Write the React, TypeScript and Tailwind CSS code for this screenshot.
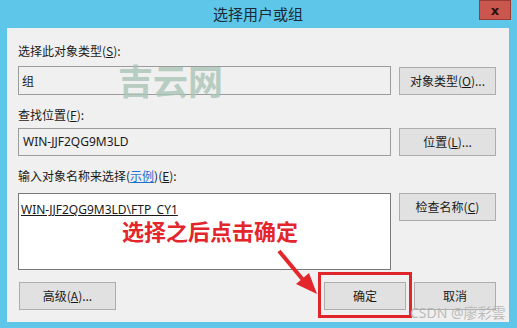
import React from "react";

const cjk = { fontFamily: '"Noto Sans CJK SC", "Noto Sans", sans-serif' };

function Btn({ children, className = "w-[97px]" }: { children: React.ReactNode; className?: string }) {
  return (
    <div
      className={`h-[28px] flex items-center justify-center bg-[#e1e1e1] border border-[#adadad] text-[12px] text-[#1a1a1a] ${className}`}
    >
      {children}
    </div>
  );
}

export default function App() {
  return (
    <div className="w-[517px] h-[328px] bg-[#5ec6e8] flex flex-col relative overflow-hidden" style={cjk}>
      {/* title bar */}
      <div className="h-[28px] relative flex items-center justify-center">
        <span className="text-[15px] text-[#1b2a33] pr-[1px]">选择用户或组</span>
        <div className="absolute left-[479px] top-0 w-[32px] h-[20px] bg-[#c9574d] border border-[#9a3b34] flex items-center justify-center">
          <span className="text-[13px] font-bold text-[#2a0f0d] leading-none" style={{ fontFamily: '"DejaVu Sans", sans-serif' }}>x</span>
        </div>
      </div>
      {/* body */}
      <div className="flex-1 flex pl-[7px] pr-[8px] pb-[6px]">
        <div className="flex-1 bg-[#f0f0f0] pl-[11px] pr-[13px] pt-[14px] flex flex-col text-[12px] text-[#1a1a1a]">
          <div className="h-[17px] leading-[17px]">选择此对象类型(<u>S</u>):</div>
          <div className="mt-[7px] flex gap-[8px]">
            <div className="w-[373px] h-[29px] border border-[#9c9c9c] bg-[#f0f0f0] pl-[3px] flex items-center">组</div>
            <Btn className="w-[97px] mt-[1px]">对象类型(<u>O</u>)...</Btn>
          </div>
          <div className="mt-[11px] h-[17px] leading-[17px]">查找位置(<u>F</u>):</div>
          <div className="mt-[5px] flex gap-[8px]">
            <div className="w-[373px] h-[28px] border border-[#9c9c9c] bg-[#f0f0f0] pl-[4px] flex items-center" style={{ fontFamily: '"Noto Sans", sans-serif' }}>WIN-JJF2QG9M3LD</div>
            <Btn>位置(<u>L</u>)...</Btn>
          </div>
          <div className="mt-[11px] h-[17px] leading-[17px]">
            输入对象名称来选择(<span className="text-[#1f6fd0] underline">示例</span>)(<u>E</u>):
          </div>
          <div className="mt-[9px] flex gap-[8px]">
            <div className="w-[373px] h-[77px] border border-[#7a7a7a] bg-white pl-[2px] pt-[6px]">
              <span className="underline text-[12px]" style={{ fontFamily: '"Noto Sans", sans-serif' }}>WIN-JJF2QG9M3LD\FTP_CY1</span>
            </div>
            <Btn>检查名称(<u>C</u>)</Btn>
          </div>
          <div className="mt-[12px] flex">
            <Btn className="w-[97px] ml-[1px]">高级(<u>A</u>)...</Btn>
            <div className="flex-1" />
            <Btn className="w-[82px]">确定</Btn>
            <Btn className="w-[82px] ml-[8px]">取消</Btn>
          </div>
        </div>
      </div>

      {/* watermark 吉云网 */}
      <div className="absolute left-[118px] top-[64px] text-[35px] font-bold text-[#a9c5b6] opacity-80 leading-[32px]">吉云网</div>

      {/* red annotation */}
      <div className="absolute left-[122px] top-[219px] text-[22px] font-bold text-[#e3262b] leading-none">选择之后点击确定</div>

      {/* arrow */}
      <svg className="absolute left-0 top-0" width="517" height="328">
        <line x1="279" y1="251" x2="304" y2="281" stroke="#e3262b" strokeWidth="4" />
        <polygon points="317,294 296,284 309,273" fill="#e3262b" />
      </svg>

      {/* highlight box */}
      <div className="absolute left-[318px] top-[272px] w-[94px] h-[46px] border-[3px] border-[#e0262a]" />

      {/* CSDN watermark */}
      <div className="absolute left-[410px] top-[306px] text-[14px] text-[#b5b5b5] leading-none opacity-90" style={{ fontFamily: '"Noto Sans", "Noto Sans CJK SC", sans-serif' }}>CSDN @廖彩雲</div>
    </div>
  );
}
